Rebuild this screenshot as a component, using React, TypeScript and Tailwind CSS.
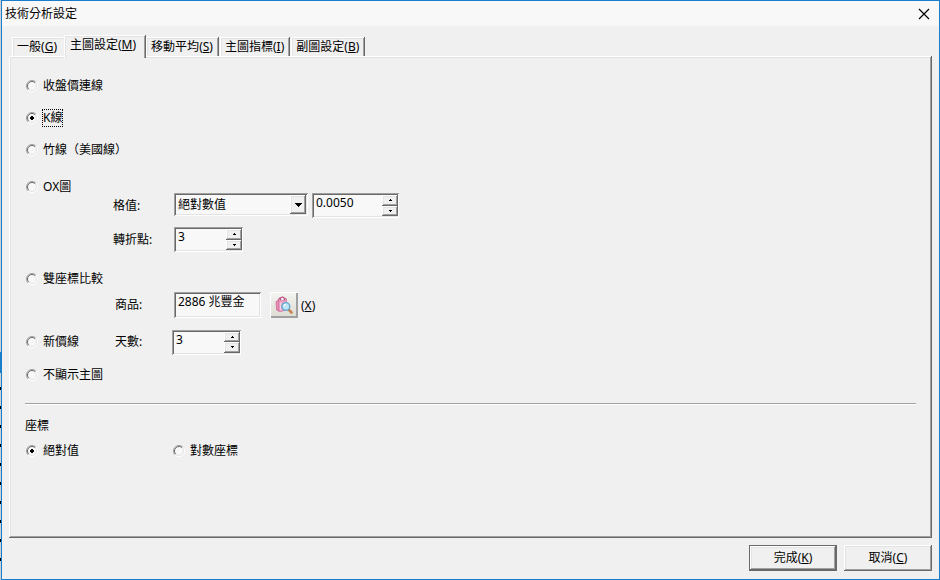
import React, { useState } from 'react';

const TABS = [
  { id: 'general', label: '一般', hotkey: 'G' },
  { id: 'main', label: '主圖設定', hotkey: 'M' },
  { id: 'ma', label: '移動平均', hotkey: 'S' },
  { id: 'indicator', label: '主圖指標', hotkey: 'I' },
  { id: 'sub', label: '副圖設定', hotkey: 'B' },
];

// Left edges of the rows behind the dialog
const ROW_MARKS = [388, 407, 426, 445, 464, 483, 502, 521, 540, 559];

const RAISED =
  'bg-[#f0f0f0] shadow-[inset_-1px_-1px_#696969,inset_1px_1px_#ffffff,inset_-2px_-2px_#a0a0a0,inset_2px_2px_#e3e3e3]';
const SUNKEN =
  'bg-[#f8f8f8] shadow-[inset_1px_1px_#a0a0a0,inset_-1px_-1px_#ffffff,inset_2px_2px_#696969,inset_-2px_-2px_#e3e3e3]';

const Hotkey: React.FC<{ char: string }> = ({ char }) => (
  <>
    (<span className="underline decoration-1 underline-offset-1">{char}</span>)
  </>
);

type RadioProps = {
  name: string;
  value: string;
  label: string;
  current: string;
  onChange: (value: string) => void;
  focused?: boolean;
};

const Radio: React.FC<RadioProps> = ({ name, value, label, current, onChange, focused }) => (
  <label className="flex items-center gap-1 whitespace-nowrap">
    <span className="relative h-3 w-[13px] shrink-0">
      <input
        type="radio"
        name={name}
        value={value}
        checked={current === value}
        onChange={() => onChange(value)}
        className="absolute inset-0 m-0 h-3 w-3 appearance-none outline-none"
      />
      <svg width="13" height="12" viewBox="-1 0 13 12" className="pointer-events-none absolute inset-0" aria-hidden="true">
        <circle cx="6" cy="6" r="5" fill="#f8f8f8" />
        <path d="M2.1 9.9A5.5 5.5 0 0 1 9.9 2.1" fill="none" stroke="#a0a0a0" />
        <path d="M2.8 9.2A4.5 4.5 0 0 1 9.2 2.8" fill="none" stroke="#696969" />
        <path d="M9.9 2.1A5.5 5.5 0 0 1 2.1 9.9" fill="none" stroke="#ffffff" />
        <path d="M9.2 2.8A4.5 4.5 0 0 1 2.8 9.2" fill="none" stroke="#e3e3e3" />
        {current === value && <path d="M5 4h2v1h1v2h-1v1h-2v-1h-1v-2h1z" fill="#000000" />}
      </svg>
    </span>
    <span className={focused ? 'border border-dotted border-black' : 'border border-transparent'}>{label}</span>
  </label>
);

type SpinnerProps = { id: string; initial: string; step: number; digits: number; wide?: boolean };

const Spinner: React.FC<SpinnerProps> = ({ id, initial, step, digits, wide }) => {
  const [value, setValue] = useState(initial);
  const bump = (dir: number) => setValue((v) => Math.max(0, (Number(v) || 0) + dir * step).toFixed(digits));

  return (
    <div className={`flex h-[25px] p-0.5 pr-px ${wide ? 'w-[87px]' : 'w-[69px]'} ${SUNKEN}`}>
      <input
        id={id}
        type="text"
        inputMode="decimal"
        value={value}
        onChange={(e) => setValue(e.target.value)}
        className="h-4 min-w-0 flex-1 bg-transparent px-0.5 outline-none"
      />
      <div className="flex w-4 flex-col">
        <button type="button" aria-label="增加" onClick={() => bump(1)} className={`flex flex-1 items-center justify-center ${RAISED}`}>
          <svg width="3" height="2" viewBox="0 0 3 2" shapeRendering="crispEdges" aria-hidden="true">
            <path d="M1 0h1v1h1v1h-3v-1h1z" fill="#000000" />
          </svg>
        </button>
        <button type="button" aria-label="減少" onClick={() => bump(-1)} className={`flex flex-1 items-center justify-center ${RAISED}`}>
          <svg width="3" height="2" viewBox="0 0 3 2" shapeRendering="crispEdges" aria-hidden="true">
            <path d="M0 0h3v1h-1v1h-1v-1h-1z" fill="#000000" />
          </svg>
        </button>
      </div>
    </div>
  );
};

const ProductIcon: React.FC = () => (
  <svg width="18" height="18" viewBox="0 0 18 18" fill="none" aria-hidden="true">
    <path d="M3.5 5V3.5L5.5 1.5M5.5 4.5V2L7.5 1l2 1.2v3" stroke="#c05587" strokeWidth="1.2" />
    <path d="M1 5.5l3-1.2v11L1.6 14z" fill="#e48db3" stroke="#cf6a9a" strokeWidth="0.8" />
    <path d="M4 5l7.5-.8V14L4.5 15.8z" fill="#f0a6c8" stroke="#d67aa6" strokeWidth="0.8" />
    <path d="M5.5 6.5v7.5" stroke="#f9cfe0" strokeWidth="1.5" />
    <path d="M9 3.5l1.5-1.5 1 2" stroke="#c05587" />
    <path d="M13.5 13.5l3 3" stroke="#c88452" strokeWidth="2.6" strokeLinecap="round" />
    <circle cx="10.8" cy="10.5" r="3.9" fill="#bfe5f7" stroke="#63a5cf" strokeWidth="1.4" />
    <path d="M8.8 10.2a2.2 2.2 0 0 1 2-1.9" stroke="#ffffff" strokeWidth="1.2" />
  </svg>
);

const App: React.FC = () => {
  const [tab, setTab] = useState('main');
  const [chart, setChart] = useState('k');
  const [axis, setAxis] = useState('absolute');
  const [mode, setMode] = useState('absolute');
  const [product, setProduct] = useState('2886 兆豐金');

  const chartRadio = { name: 'chart', current: chart, onChange: setChart };
  const axisRadio = { name: 'axis', current: axis, onChange: setAxis };

  return (
    <div
      lang="zh-TW"
      className="flex min-h-screen bg-[#c8d0d8] text-xs leading-4 text-black font-['Noto_Sans','Noto_Sans_CJK_TC',sans-serif] [text-spacing-trim:space-all]"
    >
      <div className="relative w-px shrink-0 overflow-hidden" aria-hidden="true">
        <div className="absolute top-[352px] h-[21px] w-px bg-[#1a7fc9]" />
        {ROW_MARKS.map((y) => (
          <div key={y} className="absolute h-[3px] w-px bg-black" style={{ top: y - 1 }} />
        ))}
      </div>

      <main className="flex min-w-0 flex-1 flex-col border border-[#1a7dcb] bg-[#f0f0f0]">
        <header className="flex h-[25px] items-center justify-between bg-[#f8f8f8] pl-[3px] pr-[9px]">
          <h1>技術分析設定</h1>
          <button type="button" aria-label="關閉">
            <svg width="12" height="12" viewBox="0 0 12 12" aria-hidden="true">
              <path d="M1 1l10 10M11 1L1 11" stroke="#000000" strokeWidth="1.2" />
            </svg>
          </button>
        </header>

        <div className="flex flex-1 flex-col px-[7px] pt-[9px]">
          <div role="tablist" className="flex items-end pl-[3px]">
            {TABS.map((t) => (
              <button
                key={t.id}
                type="button"
                role="tab"
                aria-selected={tab === t.id}
                onClick={() => setTab(t.id)}
                className={
                  tab === t.id
                    ? 'relative z-10 -mb-0.5 h-[23px] bg-[#f0f0f0] pl-1.5 pr-2.5 pb-[3px] shadow-[inset_-1px_0_#696969,inset_1px_1px_#ffffff,inset_-2px_0_#a0a0a0,inset_2px_2px_#e3e3e3]'
                    : 'mr-px h-[19px] pl-[5px] pr-1.5 shadow-[inset_-1px_0_#696969,inset_1px_1px_#ffffff,inset_-2px_0_#a0a0a0,inset_2px_2px_#e3e3e3] has-[+[aria-selected=true]]:shadow-[inset_1px_1px_#ffffff,inset_2px_2px_#e3e3e3]'
                }
              >
                {t.label}
                <Hotkey char={t.hotkey} />
              </button>
            ))}
          </div>

          <section role="tabpanel" className={`flex-1 px-4 pt-3.5 ${RAISED}`}>
            <div className="flex h-8 items-center">
              <Radio {...chartRadio} value="close" label="收盤價連線" />
            </div>
            <div className="flex h-8 items-center">
              <Radio {...chartRadio} value="k" label="K線" focused />
            </div>
            <div className="flex h-8 items-center">
              <Radio {...chartRadio} value="bamboo" label="竹線（美國線）" />
            </div>

            <div className="flex h-24 items-start">
              <div className="flex h-[42px] w-[88px] items-center">
                <Radio {...chartRadio} value="ox" label="OX圖" />
              </div>
              <div className="flex flex-col gap-[9px] pt-[27px]">
                <div className="flex items-start">
                  <label htmlFor="grid-mode" className="w-[61px] pt-[5px]">格值:</label>
                  <div className="relative mr-1 h-[23px] w-[134px]">
                    <select
                      id="grid-mode"
                      value={mode}
                      onChange={(e) => setMode(e.target.value)}
                      className={`h-full w-full appearance-none pl-1 outline-none ${SUNKEN}`}
                    >
                      <option value="absolute">絕對數值</option>
                      <option value="percent">百分比</option>
                    </select>
                    <span className={`pointer-events-none absolute inset-y-0.5 right-0.5 flex w-4 items-center justify-center ${RAISED}`}>
                      <svg width="7" height="4" viewBox="0 0 7 4" shapeRendering="crispEdges" aria-hidden="true">
                        <path d="M0 0h7v1h-1v1h-1v1h-1v1h-1v-1h-1v-1h-1v-1h-1z" fill="#000000" />
                      </svg>
                    </span>
                  </div>
                  <Spinner id="grid-value" initial="0.0050" step={0.0001} digits={4} wide />
                </div>
                <div className="flex items-center">
                  <label htmlFor="turning" className="w-[61px]">轉折點:</label>
                  <Spinner id="turning" initial="3" step={1} digits={0} />
                </div>
              </div>
            </div>

            <div className="flex h-16 items-start">
              <div className="flex h-[34px] w-[90px] items-center">
                <Radio {...chartRadio} value="dual" label="雙座標比較" />
              </div>
              <div className="flex items-center pt-[30px]">
                <label htmlFor="product" className="w-[59px]">商品:</label>
                <div className={`mr-[9px] h-[26px] w-[87px] p-0.5 ${SUNKEN}`}>
                  <input
                    id="product"
                    type="text"
                    value={product}
                    onChange={(e) => setProduct(e.target.value)}
                    className="h-4 w-full bg-transparent px-0.5 outline-none"
                  />
                </div>
                <button
                  type="button"
                  aria-label="選擇商品"
                  className="mr-[3px] flex h-[26px] w-7 items-center justify-center bg-linear-to-b from-[#f4f4f2] to-[#dcdcd2] shadow-[inset_1px_1px_#ffffff,inset_-2px_-2px_#a0a0a0]"
                >
                  <ProductIcon />
                </button>
                <span className="pt-0.5"><Hotkey char="X" /></span>
              </div>
            </div>

            <div className="flex h-8 items-center">
              <div className="w-[90px]">
                <Radio {...chartRadio} value="newprice" label="新價線" />
              </div>
              <label htmlFor="days" className="w-[57px]">天數:</label>
              <Spinner id="days" initial="3" step={1} digits={0} />
            </div>
            <div className="flex h-[34px] items-center">
              <Radio {...chartRadio} value="none" label="不顯示主圖" />
            </div>

            <hr className="mb-3.5 mt-[11px] border-t border-[#a0a0a0] shadow-[0_1px_#ffffff]" />

            <h2>座標</h2>
            <div className="flex items-center pt-2">
              <div className="w-[147px]">
                <Radio {...axisRadio} value="absolute" label="絕對值" />
              </div>
              <Radio {...axisRadio} value="log" label="對數座標" />
            </div>
          </section>

          <footer className="flex justify-end gap-[7px] pb-2 pt-[7px]">
            <button type="button" className={`h-[26px] w-[88px] border border-[#696969] ${RAISED}`}>
              完成
              <Hotkey char="K" />
            </button>
            <button type="button" className={`h-[26px] w-[88px] ${RAISED}`}>
              取消
              <Hotkey char="C" />
            </button>
          </footer>
        </div>
      </main>
    </div>
  );
};

export default App;
